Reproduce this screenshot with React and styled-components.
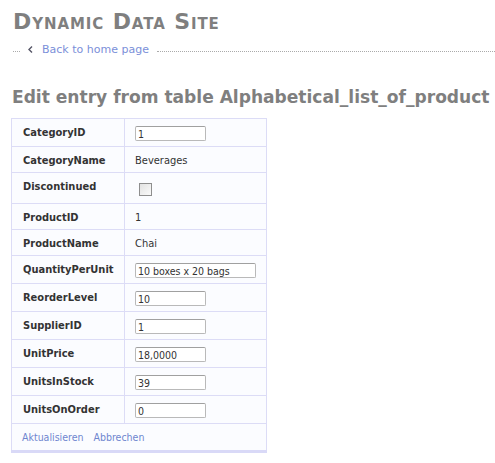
import React from "react";
import styled, { createGlobalStyle } from "styled-components";

const Global = createGlobalStyle`
  html, body { margin: 0; padding: 0; overflow: hidden; background: #fff; }
  body { font-family: "DejaVu Sans Condensed", "DejaVu Sans", Tahoma, sans-serif; font-size: 11px; color: #333; }
`;

const Page = styled.div`
  padding: 9px 0 0 13px;
  white-space: nowrap;
`;

const SiteTitle = styled.h1`
  margin: 0;
  font-family: "DejaVu Sans", Tahoma, sans-serif;
  font-size: 22px;
  letter-spacing: 0.9px;
  font-weight: bold;
  font-variant: small-caps;
  color: #7f7f7f;
  line-height: 26px;
`;

const BackBar = styled.div`
  display: flex;
  align-items: center;
  margin-top: 6px;
  height: 16px;
`;

const Dots = styled.span`
  flex: ${(p) => (p.$grow ? 1 : "none")};
  width: ${(p) => (p.$grow ? "auto" : "7px")};
  border-top: 1px dotted #aaa;
  margin-top: 4px;
`;

const BackLink = styled.a`
  display: inline-flex;
  align-items: center;
  gap: 9px;
  padding: 0 8px 0 8px;
  color: #7b8fd9;
  text-decoration: none;
  font-family: "DejaVu Sans", Tahoma, sans-serif;
  font-size: 11px;
`;

const Heading = styled.h2`
  margin: 29px 0 0 -1px;
  font-family: "DejaVu Sans", Tahoma, sans-serif;
  font-size: 17.1px;
  letter-spacing: -0.02px;
  font-weight: bold;
  color: #7f7f7f;
  line-height: 22px;
`;

const Table = styled.table`
  margin: 10px 0 0 -2px;
  border-collapse: collapse;
  background: #fbfcff;
  border: 1px solid #dcdcf6;
  border-bottom: 3px solid #d9d9f7;
`;

const Row = styled.tr`
  border-bottom: 1px solid #dcdcf6;
`;

const Label = styled.th`
  text-align: left;
  vertical-align: top;
  font-weight: bold;
  color: #333;
  width: 91px;
  padding: 7px 10px 5px 11px;
  line-height: 13px;
  border-right: 1px solid #dcdcf6;
`;

const Value = styled.td`
  vertical-align: top;
  width: 121px;
  line-height: 13px;
  padding: 7px 10px 5px 10px;
  color: #333;
`;

const TextInput = styled.input`
  box-sizing: border-box;
  width: ${(p) => (p.$wide ? "121px" : "71px")};
  height: 15px;
  margin: 0;
  padding: 0 2px;
  font: inherit;
  font-size: 10.5px;
  color: #333;
  background: #fff;
  border: 1px solid #b9b9b9;
  border-top-color: #a0a0a0;
  border-radius: 2px;
  display: block;
`;

const Check = styled.span`
  display: block;
  width: 11px;
  height: 11px;
  margin: 3px 0 2px 4px;
  border: 1px solid #8e8e8e;
  background: linear-gradient(135deg, #e2e2e2, #fafafa);
`;

const Footer = styled.td`
  padding: 7px 10px 6px 10px;
  line-height: 13px;
`;

const FootLinks = styled.div`
  display: flex;
  gap: 10px;
`;

const FootLink = styled.a`
  color: #6f86cf;
  text-decoration: none;
  font-size: 10.5px;
`;

const Arrow = () => (
  <svg width="5" height="7" viewBox="0 0 5 7">
    <path d="M4 0.5 L1 3.5 L4 6.5" stroke="#556" strokeWidth="1.4" fill="none" />
  </svg>
);

const rows = [
  { label: "CategoryID", input: "1" },
  { label: "CategoryName", text: "Beverages" },
  { label: "Discontinued", check: true },
  { label: "ProductID", text: "1" },
  { label: "ProductName", text: "Chai" },
  { label: "QuantityPerUnit", input: "10 boxes x 20 bags", wide: true },
  { label: "ReorderLevel", input: "10" },
  { label: "SupplierID", input: "1" },
  { label: "UnitPrice", input: "18,0000" },
  { label: "UnitsInStock", input: "39" },
  { label: "UnitsOnOrder", input: "0" },
];

export default function App() {
  return (
    <Page>
      <Global />
      <SiteTitle>Dynamic Data Site</SiteTitle>
      <BackBar>
        <Dots />
        <BackLink href="#">
          <Arrow />
          Back to home page
        </BackLink>
        <Dots $grow />
      </BackBar>
      <Heading>Edit entry from table Alphabetical_list_of_product</Heading>
      <Table>
        <tbody>
          {rows.map((r) => (
            <Row key={r.label}>
              <Label>{r.label}</Label>
              <Value>
                {r.input !== undefined ? (
                  <TextInput $wide={r.wide} defaultValue={r.input} />
                ) : r.check ? (
                  <Check />
                ) : (
                  r.text
                )}
              </Value>
            </Row>
          ))}
          <tr>
            <Footer colSpan={2}>
              <FootLinks>
                <FootLink href="#">Aktualisieren</FootLink>
                <FootLink href="#">Abbrechen</FootLink>
              </FootLinks>
            </Footer>
          </tr>
        </tbody>
      </Table>
    </Page>
  );
}
